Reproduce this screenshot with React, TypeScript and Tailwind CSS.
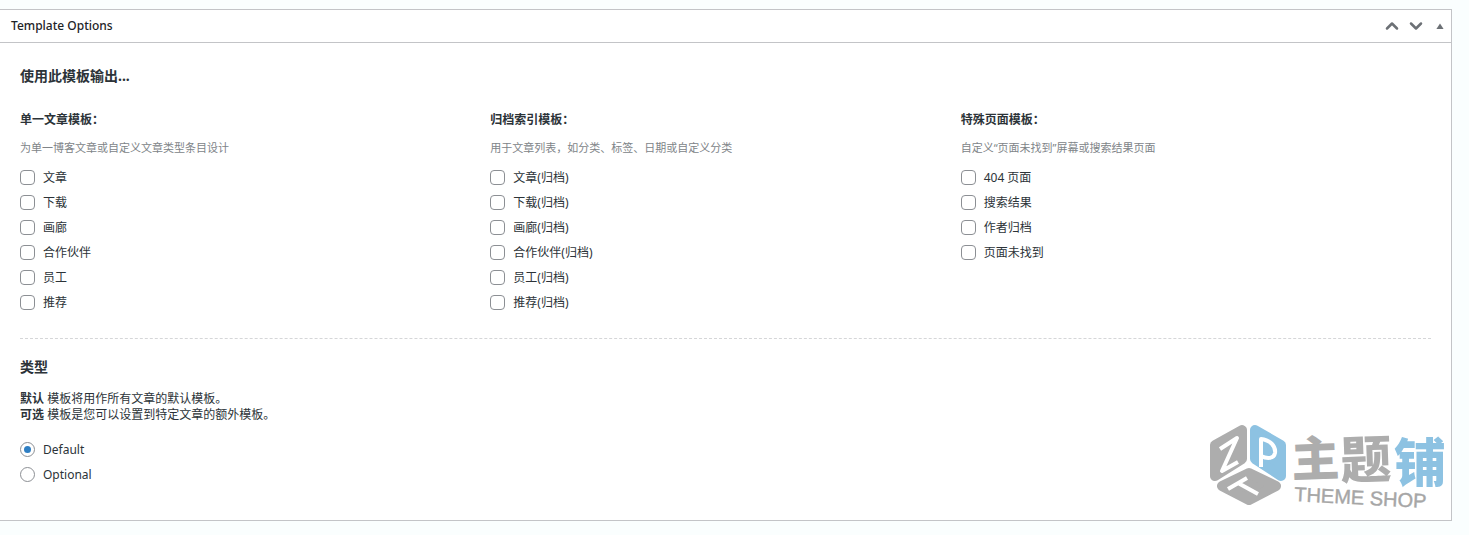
import { useState } from "react";
import { ChevronDown, ChevronUp } from "lucide-react";

interface TemplateGroup {
  id: string;
  title: string;
  description: string;
  options: string[];
}

const groups: TemplateGroup[] = [
  {
    id: "single",
    title: "单一文章模板：",
    description: "为单一博客文章或自定义文章类型条目设计",
    options: ["文章", "下载", "画廊", "合作伙伴", "员工", "推荐"],
  },
  {
    id: "archive",
    title: "归档索引模板：",
    description: "用于文章列表，如分类、标签、日期或自定义分类",
    options: [
      "文章(归档)",
      "下载(归档)",
      "画廊(归档)",
      "合作伙伴(归档)",
      "员工(归档)",
      "推荐(归档)",
    ],
  },
  {
    id: "special",
    title: "特殊页面模板：",
    description: "自定义“页面未找到”屏幕或搜索结果页面",
    options: ["404 页面", "搜索结果", "作者归档", "页面未找到"],
  },
];

const types = ["Default", "Optional"];

function TemplateColumn({ group }: { group: TemplateGroup }) {
  return (
    <fieldset>
      <legend className="text-xs leading-4 font-bold">{group.title}</legend>
      <p className="mt-3 mb-[9px] text-[11px] leading-4 text-[#808488]">
        {group.description}
      </p>
      <ul>
        {group.options.map((option) => (
          <li key={option} className="flex h-[25px] items-center">
            <label className="flex items-center gap-2 text-xs leading-4">
              <input
                type="checkbox"
                name={group.id}
                value={option}
                className="size-[15px] appearance-none rounded-[4px] border border-[#8c8f94] bg-white checked:bg-[#3582c4]"
              />
              {option}
            </label>
          </li>
        ))}
      </ul>
    </fieldset>
  );
}

function Watermark() {
  return (
    <svg
      viewBox="0 0 240 96"
      className="pointer-events-none absolute right-1 bottom-2 h-24 w-60"
      aria-hidden="true"
    >
      <g strokeLinejoin="round" strokeWidth="10">
        <path d="M8 29 L35 14 V43 L8 60 Z" fill="#adadad" stroke="#adadad" />
        <path d="M48 14 L74 29 V60 L48 43 Z" fill="#8dc2e2" stroke="#8dc2e2" />
        <path d="M15 70 L42 57 L69 70 L42 84 Z" fill="#adadad" stroke="#adadad" />
      </g>
      <g fill="none" stroke="#fff" strokeWidth="4" strokeLinejoin="round">
        <path d="M13 33 L30 22 L15 55 L31 46" />
        <path d="M54 51 V23 C63 24 69 30 68 37 C67 43 60 43 54 40" />
        <path d="M21 73 L40 62 M31 67 L51 78" />
      </g>
      <g fontFamily="'Noto Sans CJK SC', sans-serif" fontWeight="900">
        <text x="85" y="61" fontSize="48" fill="#adadad" transform="rotate(-2 85 61)">
          主
        </text>
        <text x="134" y="63" fontSize="51" fill="#adadad" transform="rotate(-2 134 63)">
          题
        </text>
        <text x="187" y="66" fontSize="52" fill="#8dc2e2">
          铺
        </text>
      </g>
      <text
        x="87"
        y="85"
        fontSize="20"
        fontFamily="'Liberation Sans', sans-serif"
        fill="#a6a6a6"
        stroke="#a6a6a6"
        strokeWidth="0.4"
        transform="rotate(3 87 85)"
      >
        THEME SHOP
      </text>
    </svg>
  );
}

export default function App() {
  const [type, setType] = useState("Default");

  return (
    <main className="min-h-screen bg-[#fafefe] pt-[9px] pr-[17px] pb-3.5 font-['Noto_Sans','Noto_Sans_CJK_SC',sans-serif] text-[#2c3338]">
      <section className="relative border border-l-0 border-[#c3c4c7] bg-white">
        <header className="flex h-[33px] items-center justify-between border-b border-[#c3c4c7] pr-[7px] pl-[11px]">
          <h2 className="text-xs leading-[18px] font-medium text-[#1d2327]">
            Template Options
          </h2>
          <div className="flex items-center gap-1 text-[#6c7075]">
            <button type="button" aria-label="Move up">
              <ChevronUp className="size-5" strokeWidth={3} />
            </button>
            <button type="button" aria-label="Move down">
              <ChevronDown className="size-5" strokeWidth={3} />
            </button>
            <button type="button" aria-label="Toggle panel" className="ml-1.5">
              <svg viewBox="0 0 8 6" className="h-1.5 w-2" fill="currentColor">
                <path d="M4 0.5 L7.6 6 H0.4 Z" />
              </svg>
            </button>
          </div>
        </header>

        <div className="px-5 pt-[23px] pb-[33px]">
          <h3 className="text-sm leading-5 font-bold">使用此模板输出...</h3>
          <div className="mt-[26px] grid grid-cols-3">
            {groups.map((group) => (
              <TemplateColumn key={group.id} group={group} />
            ))}
          </div>

          <fieldset className="mt-[23px] w-full border-t border-dashed border-[#d5d6d8] pt-[18px]">
            <h3 className="text-sm leading-5 font-bold">类型</h3>
            <p className="mt-3.5 text-xs leading-4">
              <strong>默认</strong> 模板将用作所有文章的默认模板。
              <br />
              <strong>可选</strong> 模板是您可以设置到特定文章的额外模板。
            </p>
            <div className="mt-3.5">
              {types.map((name) => (
                <div key={name} className="flex h-[25px] items-center">
                  <label className="flex items-center gap-2 text-xs leading-4">
                    <input
                      type="radio"
                      name="type"
                      value={name}
                      checked={type === name}
                      onChange={() => setType(name)}
                      className="grid size-[15px] appearance-none place-items-center rounded-full border border-[#8c8f94] bg-white before:size-[7px] before:rounded-full checked:before:bg-[#2f7fc3]"
                    />
                    {name}
                  </label>
                </div>
              ))}
            </div>
          </fieldset>
        </div>
        <Watermark />
      </section>
    </main>
  );
}
